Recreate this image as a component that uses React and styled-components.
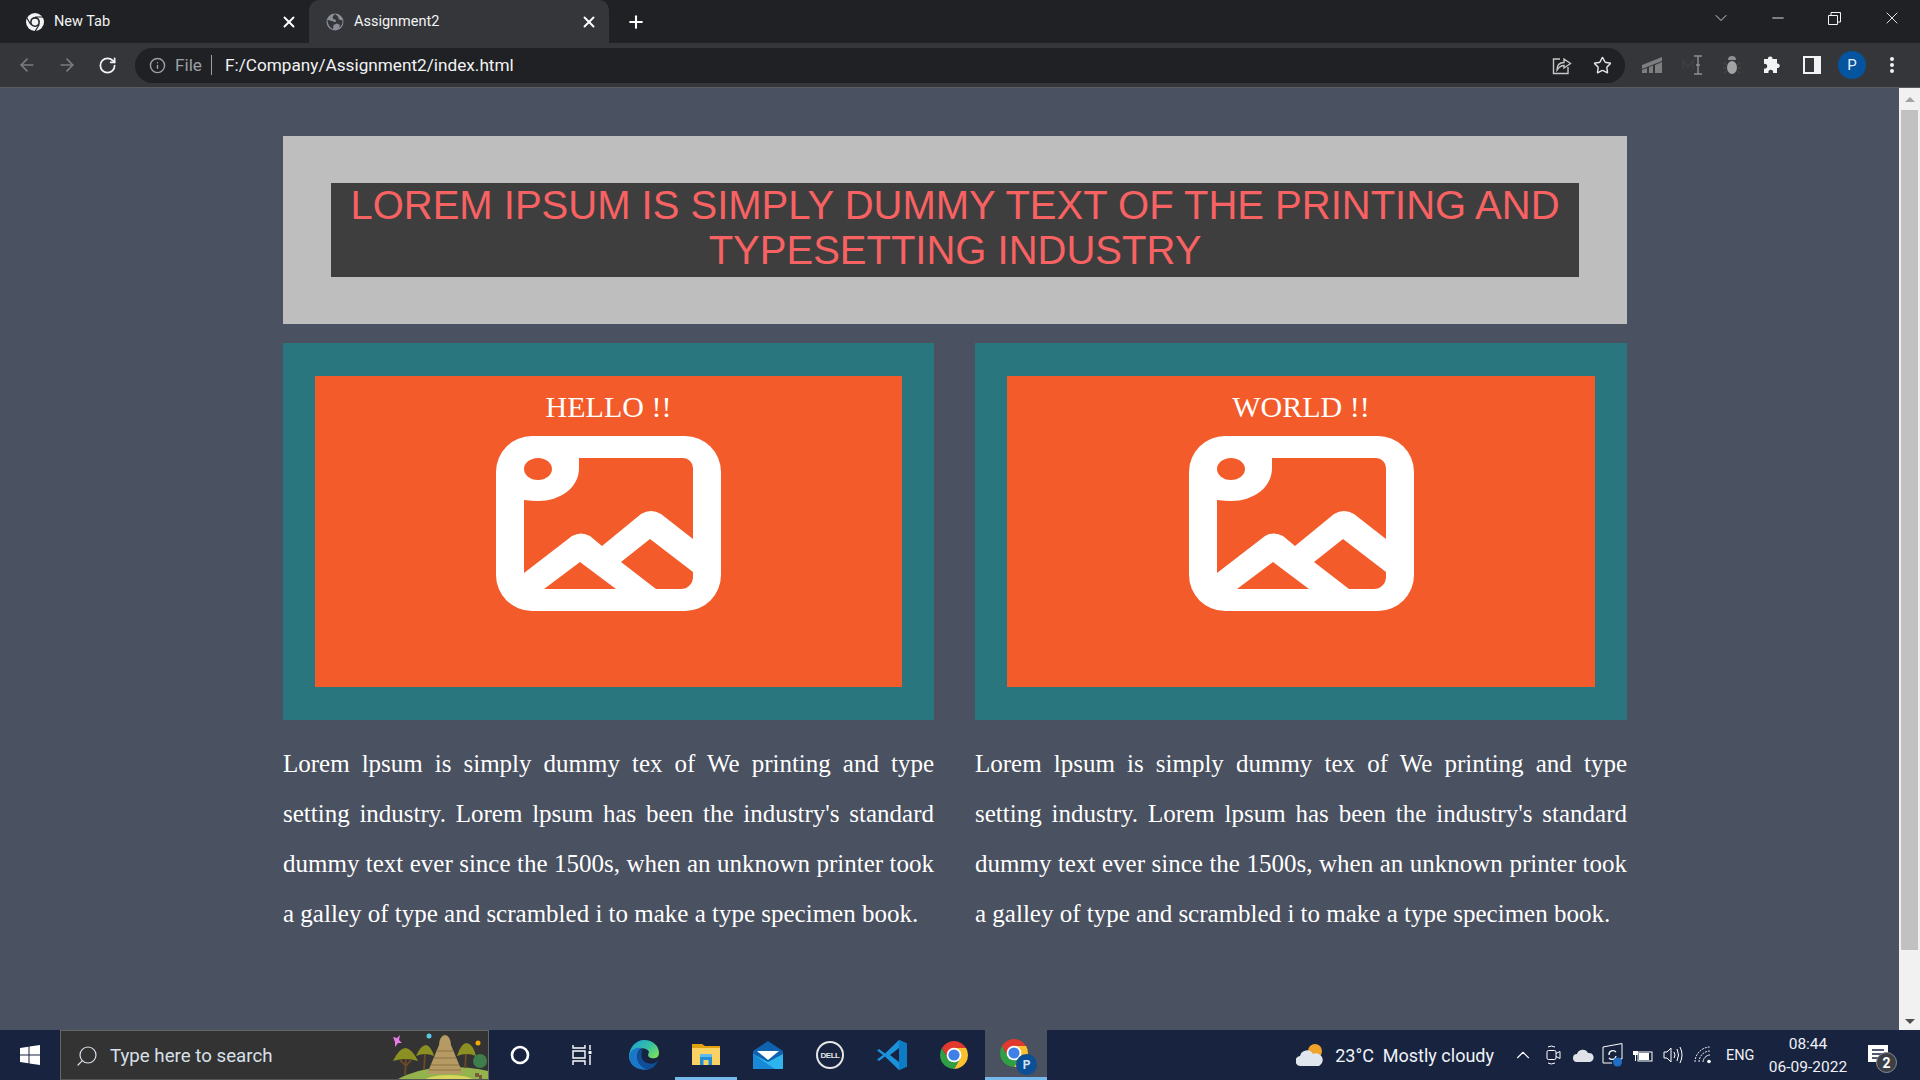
import styled, { createGlobalStyle } from "styled-components"
import { ArrowLeft, ArrowRight, RotateCw, Info, Star, X, Plus, Minus, ChevronDown, ChevronUp, Search } from "lucide-react"

const GlobalStyle = createGlobalStyle`
    html, body {
        margin: 0;
        padding: 0;
        overflow: hidden;
    }
    * {
        box-sizing: border-box;
    }
`

const Screen = styled.div`
    width: 1920px;
    height: 1080px;
    display: flex;
    flex-direction: column;
    overflow: hidden;
    background: #4a5160;
    font-family: "Roboto", "Liberation Sans", sans-serif;
`

//Browser tab strip
const TabStrip = styled.div`
    height: 43px;
    flex: none;
    display: flex;
    background: #202124;
    padding-left: 9px;
    color: #fff;
`
const Tab = styled.div`
    width: 300px;
    display: flex;
    align-items: center;
    padding: 0 11px 0 17px;
    border-radius: 10px 10px 0 0;
    background: ${p => (p.$active ? "#35363a" : "transparent")};
    font-size: 14.5px;
    color: #f1f3f4;
    svg:first-child {
        margin-right: 10px;
        flex: none;
    }
`
const TabClose = styled(X)`
    margin-left: auto;
    color: #fff;
`
const NewTab = styled.div`
    margin-left: 17px;
    width: 20px;
    display: flex;
    align-items: center;
    color: #fff;
`
const WindowControls = styled.div`
    margin-left: auto;
    display: flex;
`
const WindowButton = styled.div`
    width: 57px;
    height: 36px;
    display: flex;
    align-items: center;
    justify-content: center;
    color: #f1f3f4;
`

//Address bar row
const Toolbar = styled.div`
    height: 45px;
    flex: none;
    display: flex;
    align-items: center;
    background: #35363a;
    border-bottom: 1px solid #5b5c60;
    padding: 0 8px 0 7px;
`
const ToolButton = styled.div`
    width: 40px;
    height: 32px;
    flex: none;
    display: flex;
    align-items: center;
    justify-content: center;
    color: ${p => p.$color || "#f1f3f4"};
`
const AddressBar = styled.div`
    flex: 1;
    height: 35px;
    margin: 0 7px 0 8px;
    display: flex;
    align-items: center;
    padding: 0 3px 0 14px;
    border-radius: 18px;
    background: #202124;
    font-size: 17.2px;
`
const Scheme = styled.span`
    margin-left: 9px;
    padding-right: 9px;
    border-right: 1px solid #9aa0a6;
    line-height: 20px;
    color: #9aa0a6;
`
const Url = styled.span`
    margin-left: 13px;
    color: #f1f3f4;
`
const AddressActions = styled.div`
    margin-left: auto;
    display: flex;
`
const Avatar = styled.div`
    width: 28px;
    height: 28px;
    border-radius: 50%;
    background: #04549f;
    color: #e8f0fe;
    font-size: 15px;
    display: flex;
    align-items: center;
    justify-content: center;
`

//Page area
const Viewport = styled.div`
    flex: 1;
    min-height: 0;
    display: flex;
`
const Page = styled.main`
    flex: 1;
    padding: 48px 272px 0 283px;
`
const Hero = styled.section`
    background: #bebebe;
    padding: 47px 48px;
`
const Title = styled.h1`
    margin: 0;
    background: #3e3e3e;
    color: #f86262;
    font-family: "Liberation Sans", Arial, sans-serif;
    font-size: 40px;
    font-weight: 400;
    line-height: 45px;
    padding: 0 0 4px;
    text-align: center;
`
const Columns = styled.div`
    display: grid;
    grid-template-columns: 651px 652px;
    column-gap: 41px;
    margin-top: 19px;
`
const Column = styled.article`
    min-width: 0;
`
const Card = styled.div`
    background: #2a767e;
    padding: 33px 32px;
`
const CardInner = styled.div`
    height: 311px;
    background: #f35b2a;
    display: flex;
    flex-direction: column;
    align-items: center;
    padding-top: 13px;
`
const CardTitle = styled.h2`
    margin: 0 0 11px;
    color: #fff;
    font-family: "Liberation Serif", "Times New Roman", serif;
    font-size: 30px;
    font-weight: 400;
    line-height: 36px;
`
const Body = styled.p`
    margin: 19px 0 0;
    color: #fff;
    font-family: "Liberation Serif", "Times New Roman", serif;
    font-size: 25px;
    line-height: 50px;
    text-align: justify;
`
const Scrollbar = styled.div`
    width: 21px;
    flex: none;
    display: flex;
    flex-direction: column;
    align-items: center;
    background: #f1f1f1;
`
const ScrollArrow = styled.div`
    height: ${p => (p.$down ? "18px" : "22px")};
    flex: none;
    display: flex;
    align-items: center;
    justify-content: center;
    &::after {
        content: "";
        border-left: 5px solid transparent;
        border-right: 5px solid transparent;
        ${p => (p.$down ? "border-top: 5px solid #505050;" : "border-bottom: 5px solid #a3a3a3;")}
    }
`
const ScrollThumb = styled.div`
    width: 17px;
    height: 840px;
    background: #c1c1c1;
`
const ScrollRest = styled.div`
    flex: 1;
`

//Windows taskbar
const Taskbar = styled.footer`
    height: 50px;
    flex: none;
    display: flex;
    align-items: stretch;
    background: #17233f;
    color: #fff;
`
const StartButton = styled.div`
    width: 60px;
    flex: none;
    display: flex;
    align-items: center;
    justify-content: center;
`
const SearchBox = styled.div`
    width: 429px;
    flex: none;
    position: relative;
    display: flex;
    align-items: center;
    padding: 1px 0 0 14px;
    background: #333;
    border: 1px solid #666;
    border-bottom-color: #555;
    color: #d8e0ea;
    font-size: 18.7px;
    overflow: hidden;
`
const SearchIcon = styled(Search)`
    transform: scaleX(-1);
    margin-right: 11px;
`
const SearchArt = styled.div`
    position: absolute;
    right: -1px;
    bottom: -1px;
    height: 50px;
`
const AppSlot = styled.div`
    width: 62px;
    flex: none;
    display: flex;
    align-items: center;
    justify-content: center;
    background: ${p => (p.$active ? "#4a5160" : "transparent")};
    box-shadow: ${p => (p.$open ? "inset 0 -3px 0 #76b9ed" : "none")};
`
const Tray = styled.div`
    margin-left: auto;
    display: flex;
    align-items: center;
`
const Weather = styled.div`
    display: flex;
    align-items: center;
    gap: 11px;
    font-size: 18px;
    color: #f0f3f7;
    margin-right: 14px;
`
const WeatherText = styled.span`
    white-space: pre;
`
const TraySlot = styled.div`
    width: 30px;
    height: 100%;
    display: flex;
    align-items: center;
    justify-content: center;
`
const Lang = styled.span`
    margin-left: 8px;
    width: 30px;
    font-size: 14.5px;
    color: #eef1f5;
`
const Clock = styled.div`
    width: 84px;
    margin-left: 10px;
    display: flex;
    flex-direction: column;
    align-items: center;
    gap: 5px;
    font-size: 15.5px;
    line-height: 18px;
    color: #eef1f5;
`
const Notify = styled.div`
    width: 70px;
    height: 100%;
    position: relative;
    display: flex;
    align-items: center;
    padding-left: 18px;
`
const NotifyBadge = styled.span`
    position: absolute;
    left: 26px;
    top: 22px;
    width: 21px;
    height: 21px;
    border-radius: 50%;
    background: #3c3f46;
    border: 1px solid #8a8d92;
    color: #fff;
    font-size: 14px;
    font-weight: 700;
    display: flex;
    align-items: center;
    justify-content: center;
`

const DellMark = styled.div`
    width: 28px;
    height: 28px;
    border-radius: 50%;
    border: 2px solid #e6e6e6;
    color: #e6e6e6;
    font-family: "Liberation Sans", sans-serif;
    font-size: 8px;
    font-weight: 700;
    letter-spacing: -0.5px;
    display: flex;
    align-items: center;
    justify-content: center;
`

function ChromeLogo({ size = 28 }) {
    return (
        <svg width={size} height={size} viewBox="4 4 40 40">
            <path d="M6.7 14A20 20 0 0 1 41.3 14L24 14 15.34 29Z" fill="#e2392f" />
            <path d="M41.3 14A20 20 0 0 1 24 44L32.66 29 24 14Z" fill="#fbc02d" />
            <path d="M24 44A20 20 0 0 1 6.7 14L15.34 29 32.66 29Z" fill="#2f9e44" />
            <circle cx="24" cy="24" r="10.5" fill="#fff" />
            <circle cx="24" cy="24" r="8" fill="#3f7fe8" />
        </svg>
    )
}

function ChromeMono() {
    return (
        <svg width="18" height="18" viewBox="4 4 40 40">
            <circle cx="24" cy="24" r="20" fill="#f1f3f4" />
            <circle cx="24" cy="24" r="11" fill="#202124" />
            <circle cx="24" cy="24" r="7.5" fill="#f1f3f4" />
            <path d="M24 13H42M14.5 29.5 6 15M33.5 29.5 24 45" stroke="#202124" strokeWidth="2.5" />
        </svg>
    )
}

function GlobeIcon() {
    return (
        <svg width="18" height="18" viewBox="0 0 18 18">
            <circle cx="9" cy="9" r="8.5" fill="#8a8f97" />
            <path d="M9 1C7 3 6 4 7 5.500S10 6 10 8 7.500 8.500 6 8 2 7 1.500 7C1.500 11 4 15 7 16L7.500 12 11 10.500 14 12 13 15C15.500 13 17 10 16.500 7.500L13 6.500 12 3.500Z" fill="#35363a" />
        </svg>
    )
}

function PlaceholderImage() {
    return (
        <svg width="225" height="175" viewBox="0 0 225 175">
            <path
                fillRule="evenodd"
                fill="#fff"
                d="M36 0H189A36 36 0 0 1 225 36V139A36 36 0 0 1 189 175H36A36 36 0 0 1 0 139V36A36 36 0 0 1 36 0Z
                   M83 22H187A10 10 0 0 1 197 32V103L165 78Q155 72 145 78L106 110 94 100Q85 95 76 100L28 137V64Q36 65 42 65C64 65 83 52 83 32Z
                   M42 22C50 22 56 27 56 33S50 44 42 44 28 39 28 33 34 22 42 22Z
                   M84 126L120 153H48Z
                   M154 103L197 136V141A12 12 0 0 1 185 153H160L125 126Z"
            />
        </svg>
    )
}

function ShareIcon() {
    return (
        <svg width="20" height="20" viewBox="0 0 20 20" fill="none" stroke="#c4c7c5" strokeWidth="1.4">
            <path d="M8 4H1.500V18.500H16V12" />
            <path d="M5 15C5 10 8 7.500 12 7.500V4L18.500 8.500 12 13V10.500C9.500 10.500 7 12 5 15Z" />
        </svg>
    )
}

function BarsExtension() {
    return (
        <svg width="20" height="16" viewBox="0 0 20 16" fill="#7d7e80">
            <path d="M0 8 20 0V4L0 12ZM0 13 5 11V16H0ZM7 10 11 8.500V16H7ZM13 8 20 5V16H13Z" />
        </svg>
    )
}

function CursorExtension() {
    return (
        <svg width="24" height="20" viewBox="0 0 24 20" fill="none">
            <path d="M3 14V6L8 12 13 6V14" stroke="#3f4043" strokeWidth="1.6" />
            <path d="M14 1H22M14 19H22M18 1V19M16 10H20" stroke="#8e8f91" strokeWidth="1.4" />
        </svg>
    )
}

function BugExtension() {
    return (
        <svg width="20" height="20" viewBox="0 0 20 20">
            <path d="M2 8 5 10M1 13H4M2 18 5 16M18 8 15 10M19 13H16M18 18 15 16" stroke="#4c4d50" strokeWidth="1" />
            <path d="M6 5A4 4 0 0 1 14 5Z" fill="#8e8f91" />
            <ellipse cx="10" cy="12.500" rx="5" ry="6.500" fill="#a2a3a5" />
        </svg>
    )
}

function PuzzleIcon() {
    return (
        <svg width="18" height="18" viewBox="0 0 18 18" fill="#f1f3f4">
            <path d="M7 0.500A2.200 2.200 0 0 1 9.500 3H14V7.500A2.300 2.300 0 1 1 14 12V17H10A2.400 2.400 0 1 0 5.500 17H1V12.500A2.400 2.400 0 1 0 1 8V3H5A2 2 0 0 1 7 0.500Z" />
        </svg>
    )
}

function PanelIcon() {
    return (
        <svg width="18" height="18" viewBox="0 0 18 18">
            <path fillRule="evenodd" fill="#f1f3f4" d="M0 0H18V18H0ZM2 2V16H11V2Z" />
        </svg>
    )
}

function DotsIcon() {
    return (
        <svg width="6" height="18" viewBox="0 0 6 18" fill="#f1f3f4">
            <circle cx="3" cy="3" r="2" />
            <circle cx="3" cy="9" r="2" />
            <circle cx="3" cy="15" r="2" />
        </svg>
    )
}

function RestoreIcon() {
    return (
        <svg width="13" height="13" viewBox="0 0 13 13" fill="none" stroke="#f1f3f4">
            <path d="M0.500 3.500H9.500V12.500H0.500ZM3 3.500V0.500H12.500V10H9.500" />
        </svg>
    )
}

function WindowsLogo() {
    return (
        <svg width="20" height="20" viewBox="0 0 20 20" fill="#fff">
            <path d="M0 3 8.500 1.800V9.500H0ZM9.500 1.600 20 0V9.500H9.500ZM0 10.500H8.500V18.200L0 17ZM9.500 10.500H20V20L9.500 18.400Z" />
        </svg>
    )
}

function TempleArt() {
    return (
        <svg width="98" height="50" viewBox="0 0 98 50">
            <ellipse cx="62" cy="64" rx="66" ry="27" fill="#93b44c" />
            <ellipse cx="58" cy="52" rx="26" ry="7" fill="#d9d65c" />
            <circle cx="89" cy="31" r="7" fill="#3f7d4c" />
            <path d="M36 44 48 15H60L72 44Z" fill="#b59a63" />
            <path d="M40 35H68M43 28H65M45 21H62M38 40H70" stroke="#8a7345" strokeWidth="1" />
            <path d="M48 15A6 10 0 0 1 60 15Z" fill="#b59a63" />
            <path d="M14 46 15 28M9 30 15 36M20 30 15 36M33 40 34 24M74 38 75 24" stroke="#6b4a25" strokeWidth="1.800" />
            <path d="M2 31Q8 18 15 18 22 20 27 31 15 27 2 31Z" fill="#8c8f22" />
            <path d="M25 26Q30 15 35 15 40 16 43 26 34 22 25 26Z" fill="#8c8f22" />
            <path d="M66 26Q70 13 76 13 82 14 85 26 76 22 66 26Z" fill="#8c8f22" />
            <path d="M2 7 6 8 9 5 8 10 11 13 7 13 4 17 4 12Z" fill="#e77ce8" />
            <circle cx="38" cy="6" r="2.500" fill="#59c8e0" />
            <circle cx="87" cy="13" r="2.500" fill="#f5a800" />
            <path d="M84 43H88V47H84ZM88 45H91V49H88Z" fill="#7a5a3c" />
        </svg>
    )
}

function TaskViewIcon() {
    return (
        <svg width="20" height="20" viewBox="0 0 20 20" fill="none" stroke="#fff" strokeWidth="1.4">
            <path d="M1 0V3H13V0M1 6H13V13H1ZM1 20V16H13V20M18 0V5M18 10V20" />
            <rect x="16.500" y="6" width="3" height="3" fill="#fff" stroke="none" />
        </svg>
    )
}

function EdgeLogo() {
    return (
        <svg width="30" height="30" viewBox="0 0 30 30">
            <defs>
                <linearGradient id="edgeTop" x1="0" y1="0" x2="1" y2="0.700">
                    <stop offset="0" stopColor="#1b9de2" />
                    <stop offset="0.600" stopColor="#35c1a0" />
                    <stop offset="1" stopColor="#7ade5c" />
                </linearGradient>
            </defs>
            <path d="M15 0C24 0 30 6 30 13 30 18 25 19 22 18 18 17 19 14 20 12 18 7 8 7 4 13 2 16 1 18 0 20 -1 9 6 0 15 0Z" fill="url(#edgeTop)" />
            <path d="M0 17C1 9 8 7 13 8 8 11 7 16 9 21 11 26 17 30 21 29 14 31 1 29 0 17Z" fill="#1b78c9" />
            <path d="M9 21C7 15 9 11 14 9 11 14 12 21 18 23 23 25 27 23 29 20 27 27 21 30 18 29 14 28 10 25 9 21Z" fill="#0f4f9a" />
        </svg>
    )
}

function FolderLogo() {
    return (
        <svg width="28" height="24" viewBox="0 0 28 24">
            <path d="M0 1H10L13 3H28V22H0Z" fill="#e0a30f" />
            <path d="M0 5H28V21A1 1 0 0 1 27 22H1A1 1 0 0 1 0 21Z" fill="#fad163" />
            <path d="M8 11H20V22H16.500V17H11.500V22H8Z" fill="#1f8fd8" />
            <path d="M8 11H20V14H8Z" fill="#5dbbf0" />
        </svg>
    )
}

function MailLogo() {
    return (
        <svg width="30" height="28" viewBox="0 0 30 28">
            <path d="M15 0 30 10V28H0V10Z" fill="#0f62ae" />
            <path d="M4 10H26L15 19Z" fill="#fff" />
            <path d="M0 13 15 21 30 13V27A1 1 0 0 1 29 28H1A1 1 0 0 1 0 27Z" fill="#2fb5ee" />
            <path d="M0 13 22 28H1A1 1 0 0 1 0 27Z" fill="#1a88d8" />
        </svg>
    )
}

function VsCodeLogo() {
    return (
        <svg width="30" height="30" viewBox="0 0 30 30">
            <path d="M22 0 30 3.500V26.500L22 30 8 16.500 2 21 0 19.500 6 15 0 10.500 2 9 8 13.500ZM22 8 13 15 22 22Z" fill="#1a92dc" />
            <path d="M22 0 30 3.500V26.500L22 30Z" fill="#0d7cc4" />
        </svg>
    )
}

function ProfileChrome() {
    return (
        <Stack>
            <ChromeLogo size={28} />
            <ProfileBadge>P</ProfileBadge>
        </Stack>
    )
}

const Stack = styled.div`
    position: relative;
    width: 32px;
    height: 32px;
    display: flex;
    align-items: flex-start;
`
const ProfileBadge = styled.span`
    position: absolute;
    right: -5px;
    bottom: -4px;
    width: 21px;
    height: 21px;
    border-radius: 50%;
    background: #0b4f96;
    color: #cfe3f7;
    font-size: 12px;
    font-weight: 700;
    display: flex;
    align-items: center;
    justify-content: center;
`

function WeatherIcon() {
    return (
        <svg width="28" height="24" viewBox="0 0 28 24">
            <circle cx="19" cy="8" r="7" fill="#f0a32a" />
            <path d="M5 23A5 5 0 0 1 4 13 7 7 0 0 1 17 11 5 5 0 0 1 23 23Z" fill="#dfe6ee" />
        </svg>
    )
}

function MeetIcon() {
    return (
        <svg width="15" height="22" viewBox="0 0 15 22" fill="none" stroke="#fff" strokeWidth="1">
            <path d="M2 3Q5 1 9 3M2 19Q5 21 9 19" />
            <rect x="1" y="6.500" width="9" height="9" rx="1.500" />
            <path d="M10 9.500 14 7.500V14.500L10 12.500" />
        </svg>
    )
}

function CloudIcon() {
    return (
        <svg width="21" height="14" viewBox="0 0 21 14" fill="#dfe3e8">
            <path d="M4 14A4 4 0 0 1 4 6 6 6 0 0 1 15 5 4.500 4.500 0 0 1 17 14Z" />
        </svg>
    )
}

function SyncIcon() {
    return (
        <svg width="22" height="24" viewBox="0 0 22 24" fill="none" stroke="#fff" strokeWidth="1">
            <path d="M1 4 20 0.500V16H14M1 4V20H10" />
            <path d="M7 12A4 4 0 0 1 14 9M14 13A4 4 0 0 1 7 15" strokeWidth="1.300" />
            <circle cx="15.500" cy="19" r="4.500" fill="#1f6fc4" stroke="none" />
        </svg>
    )
}

function BatteryIcon() {
    return (
        <svg width="20" height="16" viewBox="0 0 20 16">
            <path d="M1 0V4M4 0V4M0 4H5V8H3V14H2V8H0Z" fill="#fff" />
            <rect x="5" y="5" width="14" height="9" fill="none" stroke="#fff" />
            <rect x="6" y="6" width="10" height="7" fill="#fff" />
        </svg>
    )
}

function SpeakerIcon() {
    return (
        <svg width="21" height="20" viewBox="0 0 21 20" fill="none" stroke="#fff">
            <path d="M1 7H4L8 3V17L4 13H1Z" />
            <path d="M11 7Q13 10 11 13M14 4Q17 10 14 16M17 2Q21 10 17 18" />
        </svg>
    )
}

function WifiIcon() {
    return (
        <svg width="18" height="18" viewBox="0 0 18 18" fill="none" stroke="#e4e6ea">
            <path d="M1 16C1 8 8 1 16 1M5 16C5 10 10 5 16 5" strokeDasharray="2 1" />
            <path d="M9 16C9 13 12 9 16 9" />
            <circle cx="15" cy="15.500" r="1.800" fill="#fff" stroke="none" />
        </svg>
    )
}

function NotifyIcon() {
    return (
        <svg width="20" height="20" viewBox="0 0 20 20">
            <path d="M0 0H20V17H0Z" fill="#fff" />
            <path d="M4 5H16M4 9H16M4 13H12" stroke="#17233f" strokeWidth="1.300" />
        </svg>
    )
}

const bodyText = "Lorem lpsum is simply dummy tex of We printing and type setting industry. Lorem lpsum has been the industry's standard dummy text ever since the 1500s, when an unknown printer took a galley of type and scrambled i to make a type specimen book."

const cards = ["HELLO !!", "WORLD !!"]

export default function App() {
    return (
        <Screen>
            <GlobalStyle />
            <TabStrip>
                <Tab>
                    <ChromeMono />
                    New Tab
                    <TabClose size={18} strokeWidth={2.5} />
                </Tab>
                <Tab $active>
                    <GlobeIcon />
                    Assignment2
                    <TabClose size={18} strokeWidth={2.5} />
                </Tab>
                <NewTab>
                    <Plus size={20} strokeWidth={2.5} />
                </NewTab>
                <WindowControls>
                    <WindowButton><ChevronDown size={20} strokeWidth={1} /></WindowButton>
                    <WindowButton><Minus size={18} strokeWidth={1.2} /></WindowButton>
                    <WindowButton><RestoreIcon /></WindowButton>
                    <WindowButton><X size={20} strokeWidth={1.1} /></WindowButton>
                </WindowControls>
            </TabStrip>

            <Toolbar>
                <ToolButton $color="#7b7c7f"><ArrowLeft size={20} /></ToolButton>
                <ToolButton $color="#7b7c7f"><ArrowRight size={20} /></ToolButton>
                <ToolButton><RotateCw size={19} strokeWidth={2.2} /></ToolButton>
                <AddressBar>
                    <Info size={17} color="#9aa0a6" />
                    <Scheme>File</Scheme>
                    <Url>F:/Company/Assignment2/index.html</Url>
                    <AddressActions>
                        <ToolButton><ShareIcon /></ToolButton>
                        <ToolButton><Star size={19} color="#e3e3e3" strokeWidth={1.8} /></ToolButton>
                    </AddressActions>
                </AddressBar>
                <ToolButton><BarsExtension /></ToolButton>
                <ToolButton><CursorExtension /></ToolButton>
                <ToolButton><BugExtension /></ToolButton>
                <ToolButton><PuzzleIcon /></ToolButton>
                <ToolButton><PanelIcon /></ToolButton>
                <ToolButton><Avatar>P</Avatar></ToolButton>
                <ToolButton><DotsIcon /></ToolButton>
            </Toolbar>

            <Viewport>
                <Page>
                    <Hero>
                        <Title>LOREM IPSUM IS SIMPLY DUMMY TEXT OF THE PRINTING AND TYPESETTING INDUSTRY</Title>
                    </Hero>
                    <Columns>
                        {cards.map(name => (
                            <Column key={name}>
                                <Card>
                                    <CardInner>
                                        <CardTitle>{name}</CardTitle>
                                        <PlaceholderImage />
                                    </CardInner>
                                </Card>
                                <Body>{bodyText}</Body>
                            </Column>
                        ))}
                    </Columns>
                </Page>
                <Scrollbar>
                    <ScrollArrow />
                    <ScrollThumb />
                    <ScrollRest />
                    <ScrollArrow $down />
                </Scrollbar>
            </Viewport>

            <Taskbar>
                <StartButton><WindowsLogo /></StartButton>
                <SearchBox>
                    <SearchIcon size={24} strokeWidth={1.2} />
                    Type here to search
                    <SearchArt><TempleArt /></SearchArt>
                </SearchBox>
                <AppSlot>
                    <svg width="20" height="20" viewBox="0 0 20 20" fill="none" stroke="#fff" strokeWidth="2.600">
                        <circle cx="10" cy="10" r="8" />
                    </svg>
                </AppSlot>
                <AppSlot><TaskViewIcon /></AppSlot>
                <AppSlot><EdgeLogo /></AppSlot>
                <AppSlot $open><FolderLogo /></AppSlot>
                <AppSlot><MailLogo /></AppSlot>
                <AppSlot><DellMark>DELL</DellMark></AppSlot>
                <AppSlot><VsCodeLogo /></AppSlot>
                <AppSlot><ChromeLogo /></AppSlot>
                <AppSlot $active $open><ProfileChrome /></AppSlot>
                <Tray>
                    <Weather>
                        <WeatherIcon />
                        <WeatherText>23°C  Mostly cloudy</WeatherText>
                    </Weather>
                    <TraySlot><ChevronUp size={22} strokeWidth={1.2} /></TraySlot>
                    <TraySlot><MeetIcon /></TraySlot>
                    <TraySlot><CloudIcon /></TraySlot>
                    <TraySlot><SyncIcon /></TraySlot>
                    <TraySlot><BatteryIcon /></TraySlot>
                    <TraySlot><SpeakerIcon /></TraySlot>
                    <TraySlot><WifiIcon /></TraySlot>
                    <Lang>ENG</Lang>
                    <Clock>
                        <span>08:44</span>
                        <span>06-09-2022</span>
                    </Clock>
                    <Notify>
                        <NotifyIcon />
                        <NotifyBadge>2</NotifyBadge>
                    </Notify>
                </Tray>
            </Taskbar>
        </Screen>
    )
}
